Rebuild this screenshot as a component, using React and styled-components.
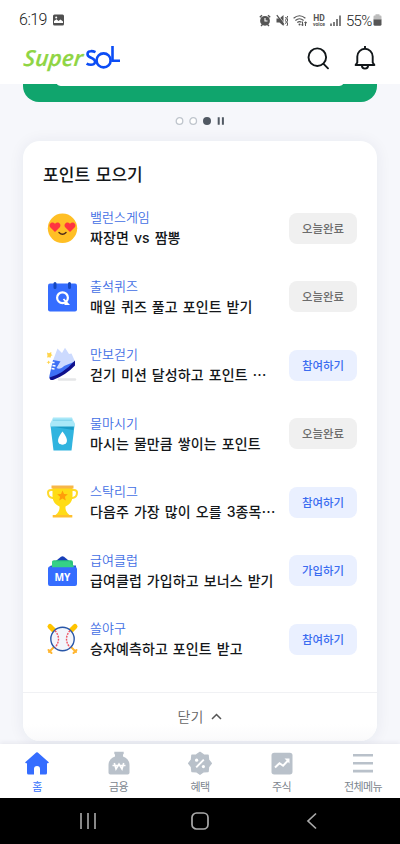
import React from "react";
import styled, { createGlobalStyle } from "styled-components";

const Global = createGlobalStyle`
  * { box-sizing: border-box; }
  body { margin: 0; background: #f6f7fb; }
  svg { display: block; flex: none; }
  button { border: 0; padding: 0; background: none; font: inherit; color: inherit; }
`;

const Screen = styled.div`
  width: 400px;
  height: 844px;
  overflow: hidden;
  display: flex;
  flex-direction: column;
  background: #f6f7fb;
  font-family: "Noto Sans CJK KR", sans-serif;
  color: #14171a;
`;

const StatusBar = styled.div`
  height: 40px;
  flex: none;
  background: #fff;
  display: flex;
  align-items: center;
  justify-content: space-between;
  padding: 0 18px 0 19px;
  font: 400 15.5px/20px Roboto, sans-serif;
  color: #5a5a5a;
`;

const StatusGroup = styled.div`
  display: flex;
  align-items: center;
`;

const StatusIcons = styled(StatusGroup)`
  gap: 4.5px;
  margin-right: 4px;
`;

const Clock = styled.span`
  width: 34px;
  letter-spacing: -0.5px;
  font-size: 16px;
  font-weight: 300;
  color: #222;
`;

const Percent = styled.span`
  width: 27px;
  font-size: 15px;
  font-weight: 300;
  letter-spacing: -0.7px;
  color: #222;
  padding-top: 1px;
`;

const Header = styled.header`
  height: 44px;
  flex: none;
  background: #fff;
  display: flex;
  align-items: flex-start;
  justify-content: space-between;
  padding: 4px 22px 0 22px;
`;

const HeaderActions = styled.div`
  display: flex;
  gap: 21.5px;
`;

const Content = styled.main`
  flex: 1;
  min-height: 0;
  overflow: hidden;
  padding: 0 23px;
`;

const Banner = styled.div`
  height: 18px;
  background: #10a56d;
  border-radius: 0 0 16px 16px;
  padding: 0 34px;
`;

const BannerInset = styled.div`
  height: 2px;
  background: #fff;
  border-radius: 0 0 6px 6px / 0 0 2px 2px;
`;

const Pager = styled.div`
  height: 39px;
  display: flex;
  align-items: center;
  justify-content: center;
  padding-bottom: 1px;
`;

const Card = styled.section`
  height: 600px;
  background: #fff;
  border-radius: 17px;
  box-shadow: 0 1px 16px rgba(30, 40, 90, 0.07);
  display: flex;
  flex-direction: column;
`;

const CardTitle = styled.h2`
  margin: 0;
  padding: 20px 20px 0;
  height: 53px;
  font-size: 17px;
  line-height: 25px;
  font-weight: 500;
  letter-spacing: 0.1px;
  word-spacing: 1.5px;
`;

const List = styled.ul`
  list-style: none;
  margin: 0;
  padding: 0 20px 0 22px;
  height: 498px;
`;

const Row = styled.li`
  height: 68.5px;
  display: flex;
  align-items: center;
`;

const Copy = styled.div`
  flex: 1;
  min-width: 0;
  margin-left: 9px;
`;

const Category = styled.div`
  font-size: 13px;
  line-height: 20px;
  margin-top: -1px;
  color: #426ee4;
  font-weight: 350;
`;

const Headline = styled.div`
  font-size: 14px;
  line-height: 21px;
  font-weight: 500;
  letter-spacing: 0.1px;
  word-spacing: 1.7px;
  white-space: nowrap;
`;

const Latin = styled.span`
  font-family: Inter, sans-serif;
  font-size: 14px;
  line-height: 1;
`;

const Action = styled.button`
  width: 68px;
  height: 31px;
  flex: none;
  border-radius: 8px;
  font-size: 11.4px;
  line-height: 31px;
  font-weight: 500;
  background: ${(p) => (p.$done ? "#f0f0f0" : "#eaf0ff")};
  color: ${(p) => (p.$done ? "#6c6c6c" : "#3b6cf0")};
`;

const CardFooter = styled.button`
  height: 49px;
  border-top: 1px solid #f0f1f4;
  border-radius: 0 0 17px 17px;
  background: linear-gradient(#fff 65%, #fafafb);
  display: flex;
  align-items: center;
  justify-content: center;
  gap: 8px;
  padding-bottom: 2px;
  font-size: 14px;
  color: #666;
  font-weight: 350;
`;

const TabBar = styled.nav`
  height: 54px;
  flex: none;
  background: #fff;
  box-shadow: 0 -2px 4px rgba(30, 40, 80, 0.06);
  display: grid;
  grid-template-columns: repeat(5, 81.5px);
  justify-content: center;
`;

const Tab = styled.div`
  display: flex;
  flex-direction: column;
  align-items: center;
  padding-top: 7px;
  font-size: 11px;
  line-height: 16px;
  letter-spacing: -0.6px;
  color: ${(p) => (p.$active ? "#356ffb" : "#7c858e")};
  gap: 1px;
`;

const SystemNav = styled.div`
  height: 46px;
  flex: none;
  background: #000;
  display: grid;
  grid-template-columns: repeat(3, 112px);
  justify-content: center;
  place-items: center;
`;

const AlarmIcon = () => (
  <svg width="12" height="13" viewBox="0 0 12 13">
    <circle cx="6" cy="6.8" r="4.9" fill="#555" />
    <path d="M.8 3.2 3 1.2M11.2 3.2 9 1.2M2 12l1.5-1.5M10 12l-1.5-1.5" stroke="#555" strokeWidth="1.4" />
    <path d="M6 4v3h2.5" stroke="#fff" strokeWidth="1.1" fill="none" />
  </svg>
);

const MuteIcon = () => (
  <svg width="13" height="13" viewBox="0 0 13 13">
    <path d="M.5 4.5h3L7.500 1v11L3.500 8.500h-3z" fill="#555" />
    <path d="M1.600.6 8.500 9.600" stroke="#fff" strokeWidth=".7" />
    <path d="M.8 1.200 8 10.700" stroke="#555" strokeWidth="1.200" />
    <path d="m9.500 3 .8 1.700-.8 1.700.8 1.700-.8 1.700M11.700 2l-.8 2 .8 2-.8 2 .8 2-.8 2" fill="none" stroke="#555" strokeWidth="1" />
  </svg>
);

const WifiIcon = () => (
  <svg width="15" height="13" viewBox="0 0 15 13">
    <g fill="none" stroke="#555" strokeWidth="1.200">
      <path d="M.6 4.300Q6.500-.8 12.400 4.300M2.400 6.500Q6.500 3 10.600 6.500M4.300 8.500Q6.500 6.700 8.500 8.200" />
      <path d="M9.500 7.500v4M8 10.300l1.500 1.500 1.200-1.200M12.500 12V8M11.200 9.200l1.300-1.400L14 9.200" strokeWidth="1" />
    </g>
    <circle cx="6.500" cy="10.500" r="1" fill="#555" />
  </svg>
);

const HdBadge = styled.div`
  width: 13px;
  height: 13px;
  display: grid;
  grid-template-rows: 8px 5px;
  justify-items: center;
  font-weight: 700;
  color: #555;
`;

const HdLabel = styled.span`
  font-size: 8.5px;
  line-height: 8px;
`;

const VoiceLabel = styled.span`
  font-size: 5px;
  line-height: 5px;
`;

const SignalIcon = () => (
  <svg width="12" height="13" viewBox="0 0 12 13">
    <path d="M1 12v-2.500M4 12V8M7 12V5M10 12V1.500" stroke="#555" strokeWidth="1.500" />
  </svg>
);

const BatteryIcon = () => (
  <svg width="9" height="12" viewBox="0 0 9 12">
    <path d="M1.500 1.500h1V.3h4v1.200h1Q8.500 1.500 8.500 2.800V6h-8V2.800Q.5 1.500 1.500 1.500" fill="#bcbcbc" />
    <path d="M.5 5.500h8v4.700q0 1.500-1.500 1.500H2Q.5 11.700.5 10.200z" fill="#555" />
  </svg>
);

const PhotoIcon = () => (
  <svg width="11" height="12" viewBox="0 0 11 12">
    <rect y=".5" width="11" height="11" rx="1.500" fill="#505050" />
    <path d="M1 9V7l2.500-1.800L5.500 7l2-1.500L10 7.500V9z" fill="#fff" />
    <circle cx="3.200" cy="3.500" r="1" fill="#fff" />
  </svg>
);

const Logo = () => (
  <svg width="100" height="32" viewBox="0 0 100 32">
    <text transform="translate(1 21.900) skewX(-5)" fontFamily="Open Sans, sans-serif" fontStyle="italic" fontWeight="600" fontSize="22" textLength="59.500" lengthAdjust="spacingAndGlyphs" fill="#8fd544" stroke="#8fd544" strokeWidth=".2">Super</text>
    <g fill="none" stroke="#0b4cf5" strokeWidth="2.600">
      <path d="M73.500 8.200Q71 7 68.600 7.200C64.800 7.400 64.600 11.500 67.600 13L70.800 14.600C75 17 73 20.800 69 20.800Q66.500 20.800 64.600 19.600" />
      <circle cx="81.600" cy="16.400" r="7" fill="#fff" />
      <path d="M90.500 2v14.800H98" />
    </g>
  </svg>
);

const SearchIcon = () => (
  <svg width="26" height="28" viewBox="0 0 26 28" fill="none" stroke="#111619" strokeWidth="1.900" strokeLinecap="round">
    <circle cx="12.300" cy="13.200" r="8.800" />
    <path d="m18.800 20.100 4.200 4.200" />
  </svg>
);

const BellIcon = () => (
  <svg width="26" height="28" viewBox="0 0 26 28" fill="none" stroke="#111619" strokeWidth="1.900" strokeLinejoin="round">
    <path d="M13 2v3M5.300 18.400V12.500a7.700 7.700 0 0 1 15.400 0v5.900l1.700 2.600H3.600z" />
    <path d="M9.900 21.500a3.100 3.100 0 0 0 6.200 0" />
  </svg>
);

const DotsIcon = () => (
  <svg width="54" height="10" viewBox="0 0 54 10">
    <g fill="#fff" stroke="#bfc5cd" strokeWidth="1.300">
      <circle cx="6.500" cy="5" r="3.300" />
      <circle cx="20.200" cy="5" r="3.300" />
    </g>
    <circle cx="34" cy="5" r="4" fill="#515963" />
    <path d="M45.700 1.200v7.600M49.900 1.200v7.600" stroke="#515963" strokeWidth="2" />
  </svg>
);

const Art = styled.svg.attrs({ viewBox: "0 0 36 36" })`
  width: 36px;
  height: 36px;
`;

const LoveFace = () => (
  <Art>
    <circle cx="17.500" cy="18.300" r="14.700" fill="#ffbf25" />
    <g fill="#ff3440">
      <path d="M10 22.100 5.200 17.300C3 14.300 7 10.500 10 13.800 13 10.500 17 14.300 14.800 17.300z" />
      <path d="M25 22.100 20.200 17.300C18 14.300 22 10.500 25 13.800 28 10.500 32 14.300 29.800 17.300z" />
    </g>
    <path d="M14 22.500q3.500 3.500 7 0" fill="none" stroke="#4b281a" strokeWidth="1.400" strokeLinecap="round" />
  </Art>
);

const QuizCalendar = () => (
  <Art>
    <rect x="3" y="4.500" width="29" height="28" rx="2" fill="#356dff" />
    <path d="M10 4.500v4M24.500 4.500v4" stroke="#1547bd" strokeWidth="3" strokeLinecap="round" />
    <circle cx="17.500" cy="18.700" r="5.400" fill="none" stroke="#fff" strokeWidth="2.200" />
    <path d="m18.500 20 4.500 5h-3.500" fill="none" stroke="#fff" strokeWidth="1.800" />
  </Art>
);

const Sneaker = () => (
  <Art>
    <path d="M14 32.500h16" stroke="#e5e6e8" strokeWidth="2.400" strokeLinecap="round" />
    <path d="M8 13.500 12.500 1.500l4.500 4.500L20 .8l4 6.200 2.500-.5 3.500 8-14 11-8-5z" fill="#ccdafe" />
    <path d="M8 13 16 14.500 12 21q4 0 7-2l11-4.500Q21 26 7 32.500q-3.500-1-2.500-4z" fill="#3e70f5" />
    <path d="M16 13.500 25 11l-7 9q-3.500 3-6.500 1z" fill="#ccdafe" />
    <path d="M30 13.500v5Q21 28 8 33q-3.500.5-3.500-2.500Q18 27 30 13.500" fill="#10118c" />
    <path d="M6.500 15.500h3M7.500 18.500l3 .5M6.500 21.500l3 .5" stroke="#fff" strokeWidth="1.300" />
    <path d="m2 5.500 2 .8 2.300-1.300-.1 2.200 1.400 1-1.500.6-.6 2L4 10.200l-2 .2.500-1.700zM3.600 13.500l.8 1.200 1.500.5-1.500.5-.8 1.500-.7-1.500-1.500-.5 1.500-.5z" fill="#ffd44b" />
  </Art>
);

const Cup = () => (
  <Art>
    <path d="M5.500 9.500h24L26.500 34.500h-18z" fill="#31b4df" />
    <path d="m6.300 10.500 22 3.500.5-4z" fill="#1b9bc6" />
    <path d="M8 1.500h19l1 2.500 2 3.700V10.500H5V7.700L7 4z" fill="#a9e8f8" />
    <path d="M8 4.200h19" stroke="#79cfea" strokeWidth="1" />
    <path d="M17.500 15.500q-7.500 9.700-2.400 12.500 2.400 1.300 4.800 0Q25 25.200 17.500 15.500" fill="#fff" />
  </Art>
);

const Trophy = () => (
  <Art>
    <path d="M8.500 6H6q-3 0-3 2.500 0 5 4.500 5.500H9M26.500 6H29q3 0 3 2.500 0 5-4.500 5.500H26" fill="none" stroke="#ffda2c" strokeWidth="2" />
    <path d="M7.500 3h20v9c0 6-3.500 9-7 10.500q-.5 5 4 8.500h-14q4.500-3.500 4-8.500C11 21 7.500 18 7.500 12z" fill="#ffdc16" />
    <path d="M6.500 1.500h22v3h-22z" fill="#f7b649" />
    <path d="M7.700 31h19.600v2.500H7.700z" fill="#ffc02e" />
    <path d="m17.500 6.500 1.500 3.500 3.800.3-2.900 2.500.9 3.700-3.300-2-3.300 2 .9-3.700-2.900-2.500 3.800-.3z" fill="#ff9d0a" />
  </Art>
);

const Wallet = () => (
  <Art>
    <path d="M9 9.500 16 3.800q1.500-1 3 0l7 5.700z" fill="#173eb8" />
    <path d="M4 15q0-1.500 2-2.500h25v3z" fill="#2b57d6" />
    <path d="M7 9q0-1.800 2-1.800h17q2 0 2 2v6.300H7z" fill="#2bc47d" />
    <path d="M7 15.500h22v-3q-4 0-4-4H7z" fill="#3ad78c" opacity=".7" />
    <path d="M3 15.500q0-2 2-2l2 .8h21.500Q32 13.500 32 16v15q0 2-2 2H5q-2 0-2-2z" fill="#356dff" />
    <text x="17.500" y="28" textAnchor="middle" fontFamily="Open Sans, sans-serif" fontSize="11" fontWeight="700" textLength="16" lengthAdjust="spacingAndGlyphs" fill="#fff">MY</text>
  </Art>
);

const Baseball = () => (
  <Art>
    <g strokeLinecap="round">
      <path d="m4 31 10-10M31 31 21 21" stroke="#ffb632" strokeWidth="2" />
      <path d="m5 5.500 6 6M30 5.500l-6 6" stroke="#ffc400" strokeWidth="5" />
      <path d="m3.500 29 3 3M31.500 29l-3 3" stroke="#ffb632" strokeWidth="2" />
    </g>
    <circle cx="17.500" cy="18" r="11.700" fill="#f3f5fb" stroke="#2856a8" strokeWidth="1.400" />
    <path d="M10 9.500q7 8.500 0 17M25 9.500q-7 8.500 0 17" fill="none" stroke="#ef5261" strokeWidth="1.400" strokeDasharray="2 1" />
  </Art>
);

const HomeIcon = () => (
  <svg width="26" height="26" viewBox="0 0 26 26">
    <path d="M12.200 1.500q.8-.7 1.600 0L24.500 11q.8 1.200-.6 1.200H23V22q0 1.500-1.500 1.500H16V18q0-3-3-3t-3 3v5.500H4.500Q3 23.500 3 22v-9.800h-.9q-1.400 0-.6-1.200z" fill="#356dff" />
  </svg>
);

const MoneyIcon = () => (
  <svg width="26" height="26" viewBox="0 0 26 26">
    <path d="M8.300.8h9.400v2.500H17v2.100q6.500 2.600 6.500 8.600v7.700q0 1.800-1.800 1.800H4.300q-1.800 0-1.800-1.800V14Q2.500 8 9 5.400V3.300h-.7z" fill="#b9c1ca" />
    <path d="m8.300 12 1.700 6 3-5 3 5 1.700-6M6.500 14.500h13" fill="none" stroke="#fff" strokeWidth="1.600" />
  </svg>
);

const BenefitIcon = () => (
  <svg width="26" height="26" viewBox="0 0 26 26">
    <path d="M13 1.300 16.600 3.900 21.100 4.100 21.600 8.800 24.400 12.300 21.600 15.900 21.100 20.500 16.600 20.800 13 23.300 9.400 20.800 4.900 20.500 4.400 15.900 1.600 12.300 4.400 8.800 4.900 4.100 9.400 3.900z" fill="#b9c1ca" strokeLinejoin="round" stroke="#b9c1ca" strokeWidth="1.300" />
    <path d="m9.200 16.300 7.600-7.700" stroke="#fff" strokeWidth="1.900" />
    <circle cx="9.600" cy="9.200" r="1.600" fill="#fff" />
    <circle cx="16.400" cy="15.600" r="1.600" fill="#fff" />
  </svg>
);

const StockIcon = () => (
  <svg width="26" height="26" viewBox="0 0 26 26">
    <rect x="2.500" y="1.700" width="21" height="21.800" rx="2.700" fill="#b9c1ca" />
    <path d="m6 16.500 4.500-4.300 3.600 2.500L19 9.500" fill="none" stroke="#fff" strokeWidth="2" />
    <path d="M15.500 7.500h5v5z" fill="#fff" />
  </svg>
);

const MenuIcon = () => (
  <svg width="26" height="26" viewBox="0 0 26 26">
    <path d="M3 4.200h20M3 12.200h20M3 20.100h20" stroke="#b9c1ca" strokeWidth="2.600" />
  </svg>
);

const rows = [
  ["밸런스게임", "짜장면 vs 짬뽕", "오늘완료", LoveFace],
  ["출석퀴즈", "매일 퀴즈 풀고 포인트 받기", "오늘완료", QuizCalendar],
  ["만보걷기", "걷기 미션 달성하고 포인트 ⋯", "참여하기", Sneaker],
  ["물마시기", "마시는 물만큼 쌓이는 포인트", "오늘완료", Cup],
  ["스탁리그", "다음주 가장 많이 오를 3종목⋯", "참여하기", Trophy],
  ["급여클럽", "급여클럽 가입하고 보너스 받기", "가입하기", Wallet],
  ["쏠야구", "승자예측하고 포인트 받고", "참여하기", Baseball],
];

const tabs = [
  ["홈", HomeIcon],
  ["금융", MoneyIcon],
  ["혜택", BenefitIcon],
  ["주식", StockIcon],
  ["전체메뉴", MenuIcon],
];

const withLatin = (text) =>
  text.split(/([a-z0-9]+)/).map((part, i) => (i % 2 ? <Latin key={i}>{part}</Latin> : part));

export default function App() {
  return (
    <Screen>
      <Global />
      <StatusBar>
        <StatusGroup>
          <Clock>6:19</Clock>
          <PhotoIcon />
        </StatusGroup>
        <StatusGroup>
          <StatusIcons>
            <AlarmIcon />
            <MuteIcon />
            <WifiIcon />
            <HdBadge>
              <HdLabel>HD</HdLabel>
              <VoiceLabel>voice</VoiceLabel>
            </HdBadge>
            <SignalIcon />
          </StatusIcons>
          <Percent>55%</Percent>
          <BatteryIcon />
        </StatusGroup>
      </StatusBar>
      <Header>
        <Logo />
        <HeaderActions>
          <SearchIcon />
          <BellIcon />
        </HeaderActions>
      </Header>
      <Content>
        <Banner>
          <BannerInset />
        </Banner>
        <Pager>
          <DotsIcon />
        </Pager>
        <Card>
          <CardTitle>포인트 모으기</CardTitle>
          <List>
            {rows.map(([category, headline, action, Icon]) => (
              <Row key={category}>
                <Icon />
                <Copy>
                  <Category>{category}</Category>
                  <Headline>{withLatin(headline)}</Headline>
                </Copy>
                <Action $done={action === "오늘완료"}>{action}</Action>
              </Row>
            ))}
          </List>
          <CardFooter>
            닫기
            <svg width="11" height="7" viewBox="0 0 11 7">
              <path d="m1 6 4.500-4.500L10 6" fill="none" stroke="#555" strokeWidth="1.500" />
            </svg>
          </CardFooter>
        </Card>
      </Content>
      <TabBar>
        {tabs.map(([label, Icon], i) => (
          <Tab key={label} $active={i === 0}>
            <Icon />
            {label}
          </Tab>
        ))}
      </TabBar>
      <SystemNav>
        <svg width="18" height="18" viewBox="0 0 18 18">
          <path d="M2 1v16M9 1v16M16 1v16" stroke="#aaa" strokeWidth="1.600" />
        </svg>
        <svg width="18" height="18" viewBox="0 0 18 18">
          <rect x="1" y="1" width="16" height="16" rx="4.500" fill="none" stroke="#aaa" strokeWidth="1.700" />
        </svg>
        <svg width="18" height="18" viewBox="0 0 18 18">
          <path d="m13 1.500-8 7.500 8 7.500" fill="none" stroke="#aaa" strokeWidth="1.700" />
        </svg>
      </SystemNav>
    </Screen>
  );
}
